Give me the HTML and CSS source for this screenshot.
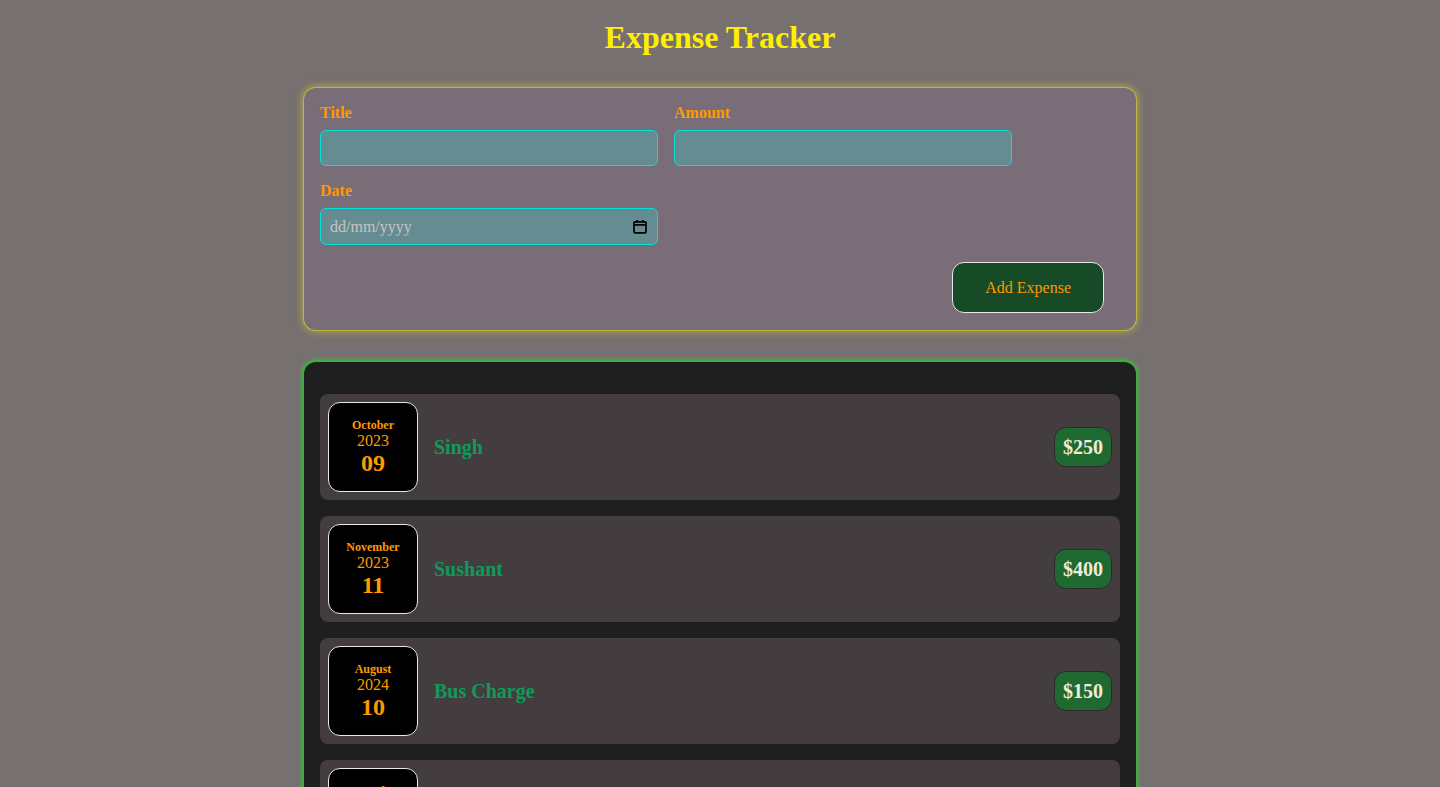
FILE: index.html
```html
<!DOCTYPE html>
<html lang="en-GB">
<head>
<meta charset="utf-8">
<title>Expense Tracker</title>
<link rel="stylesheet" href="styles.css">
</head>
<body>
<h1 class="app-title">Expense Tracker</h1>
<div class="new-expense">
  <form class="expense-form">
    <div class="controls">
      <div class="control">
        <label class="control-label">Title</label>
        <input class="control-input" type="text">
      </div>
      <div class="control">
        <label class="control-label">Amount</label>
        <input class="control-input" type="number">
      </div>
      <div class="control">
        <label class="control-label">Date</label>
        <div class="date-input">
          <span class="date-placeholder">dd/mm/yyyy</span>
          <svg class="cal-icon" width="14" height="15" viewBox="0 0 14 15"><path d="M2 2.8h10a1 1 0 0 1 1 1v9a1 1 0 0 1-1 1H2a1 1 0 0 1-1-1v-9a1 1 0 0 1 1-1z M1.8 5.8h10.4" fill="none" stroke="#000" stroke-width="1.7"/><path d="M4 1v2.5M10 1v2.5" stroke="#000" stroke-width="1.7"/></svg>
        </div>
      </div>
    </div>
    <div class="actions">
      <button class="add-btn" type="button">Add Expense</button>
    </div>
  </form>
</div>

<div class="expenses">
  <div class="expense-item">
    <div class="expense-date">
      <div class="date-month">October</div>
      <div class="date-year">2023</div>
      <div class="date-day">09</div>
    </div>
    <div class="expense-desc">
      <h2 class="expense-title">Singh</h2>
      <div class="expense-price">$250</div>
    </div>
  </div>
  <div class="expense-item">
    <div class="expense-date">
      <div class="date-month">November</div>
      <div class="date-year">2023</div>
      <div class="date-day">11</div>
    </div>
    <div class="expense-desc">
      <h2 class="expense-title">Sushant</h2>
      <div class="expense-price">$400</div>
    </div>
  </div>
  <div class="expense-item">
    <div class="expense-date">
      <div class="date-month">August</div>
      <div class="date-year">2024</div>
      <div class="date-day">10</div>
    </div>
    <div class="expense-desc">
      <h2 class="expense-title">Bus Charge</h2>
      <div class="expense-price">$150</div>
    </div>
  </div>
  <div class="expense-item">
    <div class="expense-date">
      <div class="date-month">December</div>
      <div class="date-year">2023</div>
      <div class="date-day">25</div>
    </div>
    <div class="expense-desc">
      <h2 class="expense-title">Gift</h2>
      <div class="expense-price">$100</div>
    </div>
  </div>
</div>
</body>
</html>
```
FILE: styles.css
```css
html, body {
  margin: 0;
  padding: 0;
}
body {
  background: #767070;
  font-family: "Liberation Serif", "Times New Roman", serif;
  font-size: 16px;
}
.app-title {
  margin: 0;
  padding-top: 19px;
  text-align: center;
  color: #ffee00;
  font-size: 32px;
  font-weight: bold;
  line-height: 37px;
}
.new-expense {
  width: 832px;
  box-sizing: border-box;
  margin: 32px auto 0;
  padding: 16px 16px 17px;
  background: #796d77;
  border-radius: 12px;
  box-shadow: 0 0 0 1px rgba(200, 190, 60, 0.8), 0 0 7px 2px rgba(210, 200, 50, 0.6);
}
.controls {
  display: flex;
  flex-wrap: wrap;
  gap: 16px;
}
.control {
  display: flex;
  flex-direction: column;
  width: 338px;
}
.control-label {
  font-weight: bold;
  color: #ff9900;
  margin-bottom: 8px;
  line-height: 18px;
}
.control-input, .date-input {
  box-sizing: border-box;
  width: 338px;
  height: 36px;
  padding: 8px;
  font: inherit;
  background: #658c91;
  border: 1px solid #00e3dc;
  border-radius: 6px;
  outline: none;
}
.date-input {
  height: 37px;
  display: flex;
  align-items: center;
  justify-content: space-between;
  padding: 0 10px 0 9px;
}
.date-placeholder {
  color: #c4c4c4;
  font-size: 16px;
}
.cal-icon {
  display: block;
}
.actions {
  display: flex;
  justify-content: flex-end;
  margin-top: 17px;
}
.add-btn {
  font: inherit;
  font-size: 16px;
  color: #ff9900;
  background: #174a27;
  border: 1px solid #e8e8e8;
  border-radius: 12px;
  padding: 16px 32px;
  margin-right: 16px;
  line-height: 17px;
  cursor: pointer;
}
.expenses {
  width: 832px;
  box-sizing: border-box;
  margin: 32px auto 0;
  padding: 32px 16px 16px;
  background: #1f1f1f;
  border-radius: 12px;
  box-shadow: 0 0 0 2px #3fae3f, 0 0 5px 2px rgba(70, 200, 70, 0.7);
  display: flex;
  flex-direction: column;
  gap: 16px;
}
.expense-item {
  display: flex;
  align-items: center;
  padding: 8px;
  background: #433d3f;
  border-radius: 8px;
  gap: 16px;
}
.expense-date {
  box-sizing: border-box;
  width: 90px;
  height: 90px;
  flex-shrink: 0;
  display: flex;
  flex-direction: column;
  align-items: center;
  justify-content: center;
  background: #000;
  border: 1px solid #e8e8e8;
  border-radius: 12px;
  color: #ff9900;
}
.date-month {
  font-size: 12px;
  font-weight: bold;
  line-height: 14px;
}
.date-year {
  font-size: 16px;
  line-height: 17px;
}
.date-day {
  font-size: 24px;
  font-weight: bold;
  line-height: 28px;
}
.expense-desc {
  flex: 1;
  display: flex;
  align-items: center;
  justify-content: space-between;
}
.expense-title {
  margin: 0;
  font-size: 20px;
  font-weight: bold;
  color: #109a5a;
}
.expense-price {
  font-size: 20px;
  font-weight: bold;
  color: #f0ebd8;
  background: #1f6a30;
  border: 1px solid #2a2a2a;
  border-radius: 12px;
  padding: 8px;
  line-height: 22px;
}
```
